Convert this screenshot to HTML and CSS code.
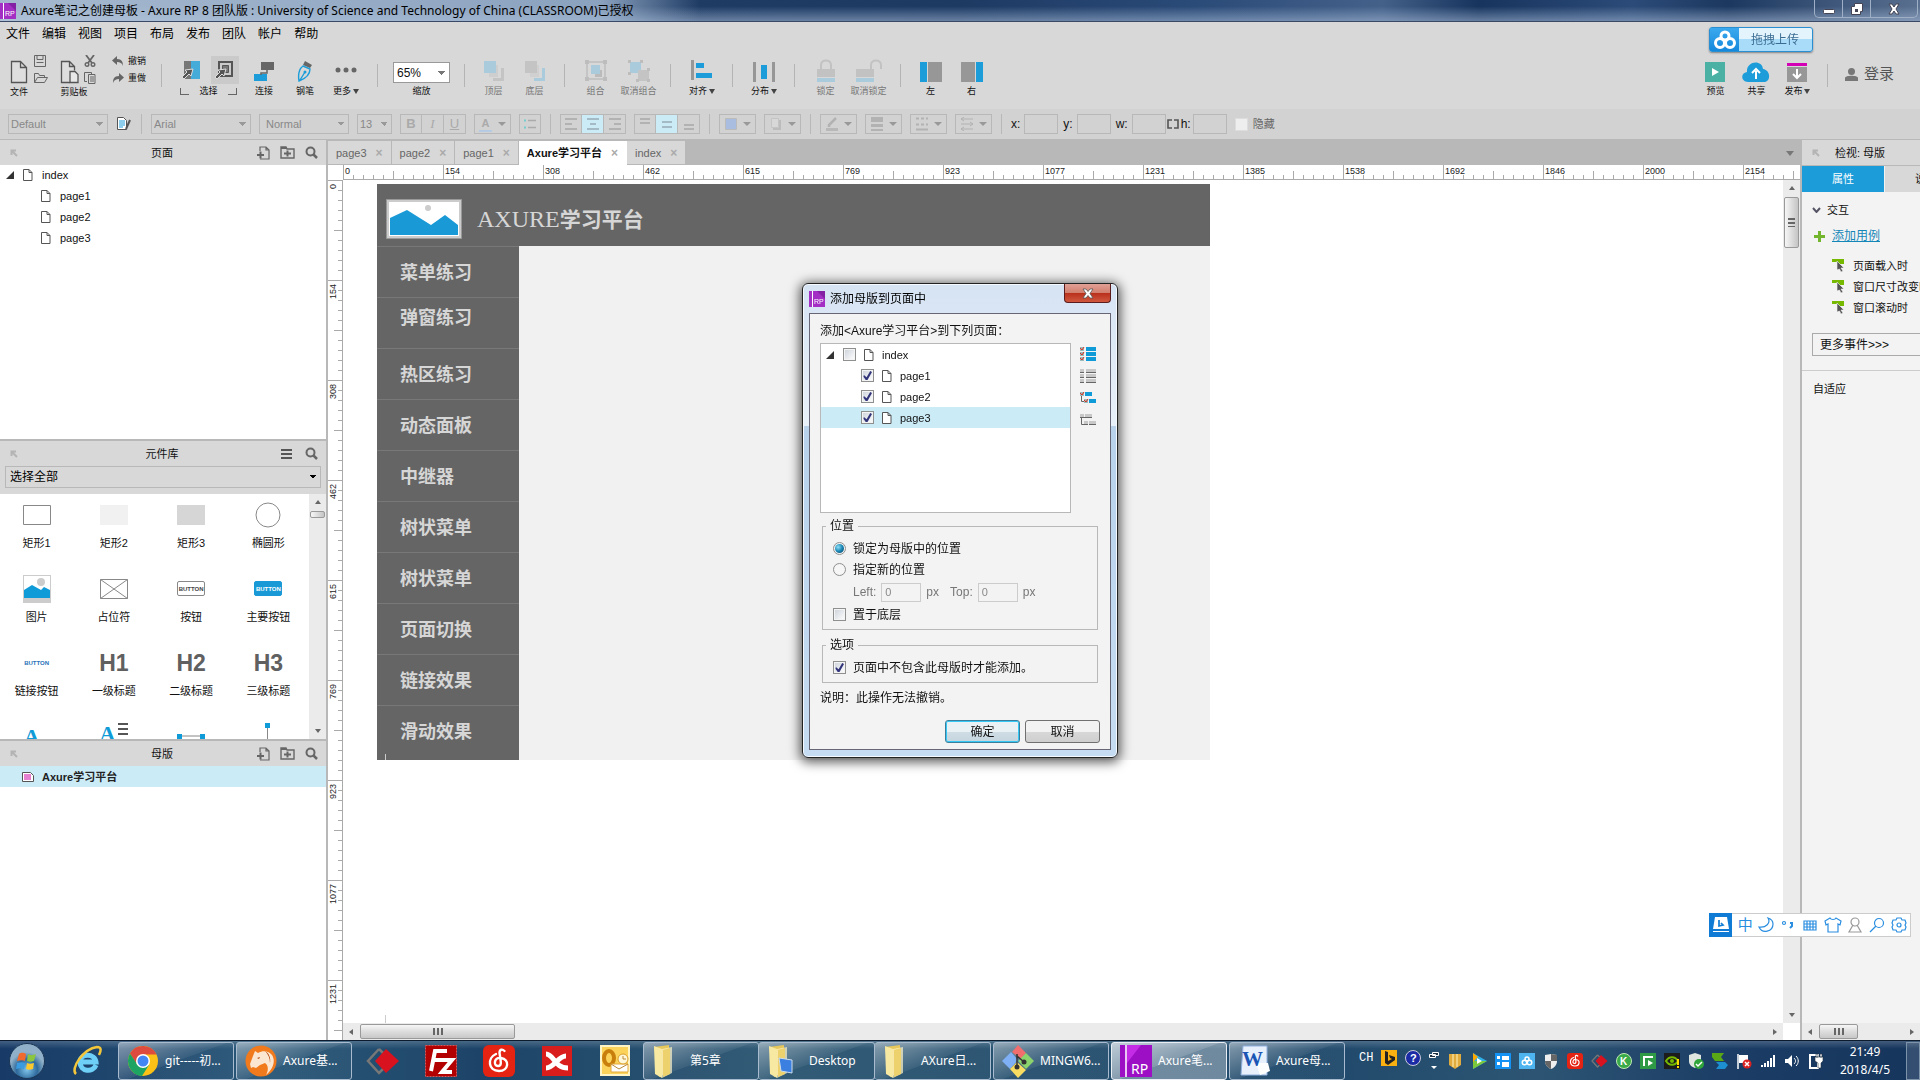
FILE: index.html
```html
<!DOCTYPE html>
<html lang="zh-CN">
<head>
<meta charset="utf-8">
<title>Axure笔记之创建母板 - Axure RP 8 团队版</title>
<link rel="stylesheet" href="styles.css">
</head>
<body>
<svg class="sprite" aria-hidden="true">
  <symbol id="rp" viewBox="0 0 16 16"><path fill="#a32fc4" d="M0 0h16v16H0z"/><path fill="#8420a4" d="M8 0h8v8z"/><path fill="#fff" d="M3 0h1v16H3z"/><text x="5" y="13" font-size="7" font-family="Liberation Sans, sans-serif" fill="#fff">RP</text></symbol>
  <symbol id="page" viewBox="0 0 10 12"><path d="M.5.5h5.500l3 3v8h-8.500zM6 .5v3h3" fill="#fff" stroke="#555"/></symbol>
  <symbol id="pin" viewBox="0 0 8 8"><path d="M1.500 6V1.500H6M2 2l5 5" fill="none" stroke="#b4b4b4" stroke-width="2"/></symbol>
  <symbol id="addpage" viewBox="0 0 13 14"><path d="M3 5V1h6l3 3v9H3M9 1v3h3" fill="none" stroke="#666" stroke-width="1.200"/><path d="M0 9h7M3.500 5.500v7" stroke="#666" stroke-width="2"/></symbol>
  <symbol id="addfolder" viewBox="0 0 15 13"><path d="M1 12V1h5l1 2h7v9z" fill="none" stroke="#666" stroke-width="1.400"/><path d="M1 1h5l1 2H1z" fill="#666"/><path d="M4 7.500h7M7.500 4.500v6" stroke="#666" stroke-width="2"/></symbol>
  <symbol id="search" viewBox="0 0 13 13"><circle cx="5.500" cy="5.500" r="4" fill="none" stroke="#666" stroke-width="2"/><path d="M8.500 8.500l3.500 3.500" stroke="#666" stroke-width="2.500"/></symbol>
  <symbol id="folder" viewBox="0 0 24 34"><path fill="#e6c75b" d="M2 3l15-2v27l-10 5z"/><path fill="#f8e9a2" d="M2 2l8 3v29l-7-4z"/><path fill="#fdf4c8" d="M10 5l10-2v26l-10 5z" opacity=".7"/><path fill="#ecd16d" d="M11 6l7-2v26l-7 3z"/></symbol>
  <symbol id="event" viewBox="0 0 14 13"><path fill="#76b900" d="M0 0h12v5H8L5 3H0z"/><path fill="#555" stroke="#f3f3f3" stroke-width=".6" d="M5 2l7 7H9l2 3-2 1-1.500-3L5 11z"/></symbol>
  <symbol id="netease" viewBox="0 0 32 32"><rect width="32" height="32" rx="6" fill="#e42313"/><path d="M13 9c-9 4-8 17 3 17 10 0 11-12 2-13-7-1-8 8-3 8 4 0 3-4 1.500-13 0-4 3-4 5-2" fill="none" stroke="#fff" stroke-width="2.400" stroke-linecap="round"/></symbol>
  <symbol id="diamond" viewBox="0 0 34 32"><path d="M13 4L2 16l11 12 6-6M13 4l5 5" fill="none" stroke="#777" stroke-width="2.500"/><path fill="#d8121f" d="M20 4l13 12-13 12L9 16z"/></symbol>
  <symbol id="cloudrings" viewBox="0 0 22 20"><g fill="none" stroke="#fff" stroke-width="3"><circle cx="11" cy="6" r="4"/><circle cx="6" cy="13" r="4.500"/><circle cx="16" cy="13" r="4.500"/></g></symbol>
  <symbol id="bing" viewBox="0 0 16 16"><path fill="#222" d="M4 1l3 1v9l4-2-2-1-1-3 6 2v3l-7 5-3-2z"/></symbol>
</svg>

<header class="titlebar">
  <svg width="16" height="18"><use href="#rp"/></svg>
  <h1>Axure笔记之创建母板 - Axure RP 8 团队版 : University of Science and Technology of China (CLASSROOM)已授权</h1>
  <div class="winbtns">
    <button aria-label="最小化"><svg width="12" height="12"><rect x=".5" y="6.500" width="11" height="4" rx="1" fill="#fff" stroke="#445"/></svg></button>
    <button aria-label="还原"><svg width="12" height="12"><path d="M3.500.5h8v8h-2v3h-9v-8h3z" fill="#fff" stroke="#445"/><path d="M4 6h3v3H4z" fill="#445"/></svg></button>
    <button class="wide" aria-label="关闭"><svg width="12" height="12"><path d="M1 1h3l2 3 2-3h3L8 6l3 5H8L6 8l-2 3H1l3-5z" fill="#fff" stroke="#445"/></svg></button>
  </div>
</header>

<nav class="menubar">
  <a href="#">文件</a><a href="#">编辑</a><a href="#">视图</a><a href="#">项目</a><a href="#">布局</a><a href="#">发布</a><a href="#">团队</a><a href="#">帐户</a><a href="#">帮助</a>
</nav>

<div class="toolbar">
  <div class="group g-file">
    <button class="tool t-doc"><svg width="18" height="24"><path d="M1.500 1.500h9l6 6v15h-15zM10.500 1.500v6h6" fill="#dedede" stroke="#555" stroke-width="1.300"/></svg><span>文件</span></button>
    <div class="stack">
      <button aria-label="保存"><svg width="12" height="12"><path d="M.5.5h11v11H.5zM3 .5v4h6v-4M2.500 7.500h7" fill="none" stroke="#666"/></svg></button>
      <button aria-label="打开"><svg width="14" height="12"><path d="M.5 10.500v-9h4l1 2h5v2M.5 10.500l3-5h10l-3 5z" fill="none" stroke="#666"/></svg></button>
    </div>
    <button class="tool t-clip"><svg width="20" height="24"><path d="M10 22.500H1.500v-21h8l5 5v4M9.500 1.500v5h5" fill="#dedede" stroke="#555" stroke-width="1.300"/><path d="M10 11.500h5l3 3v8h-8z" fill="#e8e8e8" stroke="#555" stroke-width="1.300"/></svg><span>剪贴板</span></button>
    <div class="stack cut">
      <button aria-label="剪切"><svg width="12" height="12"><path d="M2 0l6 8M10 0L4 8" stroke="#666" stroke-width="1.800"/><circle cx="3" cy="9.500" r="1.800" fill="none" stroke="#666" stroke-width="1.400"/><circle cx="9" cy="9.500" r="1.800" fill="none" stroke="#666" stroke-width="1.400"/></svg></button>
      <button aria-label="粘贴"><svg width="12" height="12"><path d="M3 9.500H.5v-9h7V2M4.500 2.500h6.500v9H4.500zM6 5h4M6 7h4M6 9h4" fill="none" stroke="#666"/></svg></button>
    </div>
    <div class="stack undo">
      <button><svg width="12" height="10"><path fill="#666" d="M5 0v3c5 0 6 3 6 7-1-3-3-4-6-4v3L0 4.500z"/></svg>撤销</button>
      <button><svg width="12" height="10"><path fill="#666" d="M7 0v3C2 3 1 6 1 10c1-3 3-4 6-4v3l5-4.500z"/></svg>重做</button>
    </div>
  </div>
  <div class="group g-select">
    <div class="modes">
      <div class="pair">
        <button aria-label="相交选择"><svg width="18" height="24"><path fill="#777" d="M1 3h7v18H1z"/><path fill="#45abd9" d="M8 3h9v18H8z"/><path fill="#555" stroke="#ddd" d="M10 11L2 12l2 2-5 5 2 2 5-5 2 2z"/></svg></button>
        <button class="on" aria-label="包含选择"><svg width="20" height="24"><path fill="none" stroke="#555" stroke-width="2" d="M4 4h13v14H4z"/><path fill="#777" stroke="#555" d="M7.500 7.500h6v7h-6z"/><path fill="#555" stroke="#ddd" d="M11 11l-8 1 2 2-5 5 2 2 5-5 2 2z"/></svg></button>
      </div>
      <span class="bracket">选择</span>
    </div>
    <button class="tool"><svg width="20" height="24"><path fill="#666" d="M7 3h13v8H7z"/><path fill="#1c9dd9" d="M0 15h13v7H0z"/><path d="M13 11v3H7v2" fill="none" stroke="#666" stroke-width="1.500"/></svg><span>连接</span></button>
    <button class="tool"><svg width="16" height="24"><path fill="#666" d="M8 2l7 4-2 3-7-3z"/><path d="M6 7l7 3c0 5-3 9-11 12-1-6 0-12 4-15zM3 21l5-8" fill="none" stroke="#1c9dd9" stroke-width="1.400"/><circle cx="8" cy="13" r="1.500" fill="#1c9dd9"/></svg><span>钢笔</span></button>
    <button class="tool"><svg width="22" height="24"><g fill="#666"><circle cx="3" cy="11" r="2.500"/><circle cx="11" cy="11" r="2.500"/><circle cx="19" cy="11" r="2.500"/></g></svg><span>更多<i class="caret"></i></span></button>
  </div>
  <div class="group g-zoom">
    <label class="zoom"><select><option>65%</option></select><span>缩放</span></label>
  </div>
  <div class="group g-order off">
    <button class="tool"><svg width="20" height="24"><path fill="#c4c4c4" d="M9 9h11v13H9v-3h8V9z"/><path fill="#cecece" d="M5 6h9v12H5z"/><path fill="#a9cbdb" d="M0 2h12v12H0z"/></svg><span>顶层</span></button>
    <button class="tool"><svg width="20" height="24"><path fill="#a9cbdb" d="M9 9h11v13H9v-3h8V9z"/><path fill="#d0d0d0" d="M5 6h9v12H5z"/><path fill="#c4c4c4" d="M0 2h12v12H0z"/></svg><span>底层</span></button>
  </div>
  <div class="group g-pair off">
    <button class="tool w"><svg width="24" height="24"><path fill="none" stroke="#bdbdbd" stroke-width="1.500" d="M3 3h18v17H3z"/><path fill="#bdbdbd" d="M1 1h4v4H1zM19 1h4v4h-4zM1 18h4v4H1zM19 18h4v4h-4z"/><path fill="#bbb" d="M11 11h7v7h-7z"/><path fill="#a9cbdb" d="M7 6h9v9H7z"/></svg><span>组合</span></button>
    <button class="tool w"><svg width="24" height="24"><path fill="#a9cbdb" d="M3 3h11v11H3z"/><path fill="#c4c4c4" d="M11 11h11v11H11z"/><path fill="#bdbdbd" d="M1 1h3v3H1zM13 1h3v3h-3zM1 13h3v3H1zM9 20h3v3H9zM20 9h3v3h-3zM20 20h3v3h-3z"/></svg><span>取消组合</span></button>
  </div>
  <div class="group g-one">
    <button class="tool"><svg width="22" height="24"><path fill="#979797" d="M0 1h3v20H0z"/><path fill="#1c9dd9" d="M5 4h8v5H5zM5 14h16v5H5z"/></svg><span>对齐<i class="caret"></i></span></button>
  </div>
  <div class="group g-one">
    <button class="tool"><svg width="22" height="24"><path fill="#979797" d="M0 3h3v20H0zM19 3h3v20h-3z"/><path fill="#1c9dd9" d="M8 6h6v14H8z"/></svg><span>分布<i class="caret"></i></span></button>
  </div>
  <div class="group g-pair off">
    <button class="tool w"><svg width="20" height="24"><path fill="#c2c2c2" d="M1 10h18v8H1z"/><path fill="#a9cbdb" d="M1 19h18v4H1z"/><path d="M5 10V6c0-6 10-6 10 0v4" fill="none" stroke="#c2c2c2" stroke-width="2"/></svg><span>锁定</span></button>
    <button class="tool w"><svg width="26" height="24"><path fill="#c2c2c2" d="M0 10h18v8H0z"/><path fill="#a9cbdb" d="M0 19h18v4H0z"/><path d="M15 10V6c0-6 10-6 10 0v4" fill="none" stroke="#c2c2c2" stroke-width="2"/></svg><span>取消锁定</span></button>
  </div>
  <div class="group g-sides">
    <button class="tool"><svg width="22" height="24"><path fill="#1c9dd9" d="M0 3h7v20H0z"/><path fill="#979797" d="M8 3h14v20H8z"/></svg><span>左</span></button>
    <button class="tool"><svg width="22" height="24"><path fill="#1c9dd9" d="M15 3h7v20h-7z"/><path fill="#979797" d="M0 3h14v20H0z"/></svg><span>右</span></button>
  </div>
  <div class="group g-share">
    <button class="tool"><svg width="20" height="24"><path fill="#4bb1a5" d="M0 3h20v20H0z"/><path fill="#fff" d="M7 9l7 4-7 4z"/></svg><span>预览</span></button>
    <button class="tool"><svg width="28" height="24"><path fill="#1c9dd9" d="M6 23c-7 0-8-9-1-10C4 2 20 0 21 10c8 1 8 13 1 13z"/><path d="M14 20v-8M10 14l4-4 4 4" fill="none" stroke="#fff" stroke-width="2"/></svg><span>共享</span></button>
    <button class="tool"><svg width="20" height="24"><path fill="#d400b5" d="M0 4h20v3H0z"/><path fill="#979797" d="M0 8h20v15H0z"/><path d="M10 10v9M6 15l4 4 4-4" fill="none" stroke="#fff" stroke-width="2"/></svg><span>发布<i class="caret"></i></span></button>
  </div>
  <button class="login"><svg width="13" height="13"><circle cx="6.500" cy="3.500" r="3.500" fill="#777"/><path fill="#777" d="M0 13V10c0-3 13-3 13 0v3z"/></svg>登录</button>
</div>

<div class="formatbar">
  <select class="w100" aria-label="样式"><option>Default</option></select>
  <button class="plain" aria-label="编辑样式"><svg width="14" height="14"><path d="M.5.5h6l3 3v9h-9z" fill="#fff" stroke="#555"/><path d="M2 4h6M2 6h6M2 8h6M2 10h4" stroke="#1c9dd9"/><path d="M13 3L9 12" stroke="#555" stroke-width="2"/></svg></button>
  <i class="sep"></i>
  <select class="w100" aria-label="字体"><option>Arial</option></select>
  <select class="w90 in" aria-label="字形"><option>Normal</option></select>
  <select class="w35" aria-label="字号"><option>13</option></select>
  <div class="seg"><button><b>B</b></button><button><em>I</em></button><button><u>U</u></button></div>
  <button class="drop"><b class="ink">A</b></button>
  <div class="seg"><button aria-label="项目符号"><svg width="14" height="14"><path d="M5 3.500h8M5 10.500h8" stroke="#aaa" stroke-width="1.500"/><path d="M1 3.500h2M1 10.500h2" stroke="#7cc" stroke-width="2"/></svg></button></div>
  <i class="sep"></i>
  <div class="seg">
    <button aria-label="左对齐"><svg width="14" height="14"><path d="M1 2h12M1 7h7M1 12h12" stroke="#b2b2b2" stroke-width="2"/></svg></button>
    <button class="on" aria-label="居中"><svg width="14" height="14"><path d="M1 2h12M4 7h6M1 12h12" stroke="#a9bcc4" stroke-width="2"/></svg></button>
    <button aria-label="右对齐"><svg width="14" height="14"><path d="M1 2h12M6 7h7M1 12h12" stroke="#b2b2b2" stroke-width="2"/></svg></button>
  </div>
  <div class="seg">
    <button aria-label="顶部"><svg width="14" height="14"><path d="M2 2h10M2 6h10" stroke="#b2b2b2" stroke-width="2"/></svg></button>
    <button class="on" aria-label="中部"><svg width="14" height="14"><path d="M2 5h10M2 10h10" stroke="#a9bcc4" stroke-width="2"/></svg></button>
    <button aria-label="底部"><svg width="14" height="14"><path d="M2 8h10M2 12h10" stroke="#b2b2b2" stroke-width="2"/></svg></button>
  </div>
  <i class="sep"></i>
  <button class="drop" aria-label="填充"><svg width="14" height="14"><path fill="#a9bde0" stroke="#bbb" d="M1.500 1.500h11v11h-11z"/></svg></button>
  <button class="drop" aria-label="阴影"><svg width="14" height="14"><path fill="#bcbcbc" d="M5 3h7v10H4v-2h6z"/><path fill="#d8d8d8" stroke="#c4c4c4" d="M2.500 1.500h7v9h-7z"/></svg></button>
  <i class="sep"></i>
  <button class="drop" aria-label="线条颜色"><svg width="14" height="14"><path d="M11 1L4 8v2" stroke="#b2b2b2" stroke-width="2.500" fill="none"/><path fill="#b8b8b8" d="M1 11h12v3H1z"/></svg></button>
  <button class="drop" aria-label="线宽"><svg width="14" height="14"><path fill="#b2b2b2" d="M1 0h12v5H1zM1 7h12v3H1zM1 12h12v2H1z"/></svg></button>
  <button class="drop" aria-label="线型"><svg width="14" height="14"><path d="M1 1.500h12M1 7.500h12" stroke="#b2b2b2" stroke-width="2" stroke-dasharray="3 2"/><path d="M1 12.500h12" stroke="#b2b2b2" stroke-width="2"/></svg></button>
  <button class="drop" aria-label="箭头"><svg width="14" height="14"><path d="M1 2h12M1 7h12M1 12h12M4 0L1 2l3 2M10 5l3 2-3 2M4 10l-3 2 3 2" stroke="#b2b2b2" fill="none"/></svg></button>
  <i class="sep"></i>
  <label>x:<input></label>
  <label>y:<input></label>
  <label>w:<input></label>
  <label class="tight"><svg width="12" height="10"><path d="M5 1H1v8h4M7 1h4v8H7" fill="none" stroke="#555" stroke-width="1.600"/></svg>h:<input></label>
  <label class="hide"><input type="checkbox">隐藏</label>
</div>

<main>
  <aside class="left">
    <section class="pages">
      <header class="phead"><svg width="8" height="8"><use href="#pin"/></svg><h2>页面</h2>
        <div class="acts"><svg width="13" height="14"><use href="#addpage"/></svg><svg width="15" height="13"><use href="#addfolder"/></svg><svg width="13" height="13"><use href="#search"/></svg></div></header>
      <ul class="tree">
        <li><i class="open"></i><svg width="10" height="12"><use href="#page"/></svg>index</li>
        <li class="sub"><svg width="10" height="12"><use href="#page"/></svg>page1</li>
        <li class="sub"><svg width="10" height="12"><use href="#page"/></svg>page2</li>
        <li class="sub"><svg width="10" height="12"><use href="#page"/></svg>page3</li>
      </ul>
    </section>
    <section class="library">
      <header class="phead"><svg width="8" height="8"><use href="#pin"/></svg><h2>元件库</h2>
        <div class="acts wide"><svg width="11" height="12"><path d="M0 2h11M0 6h11M0 10h11" stroke="#555" stroke-width="2"/></svg><svg width="13" height="13"><use href="#search"/></svg></div></header>
      <div class="pick"><select aria-label="元件库"><option>选择全部</option></select></div>
      <div class="libbody">
        <div class="widgets">
          <figure><svg width="30" height="30"><path d="M1.500 5.500h27v19h-27z" fill="#fff" stroke="#888"/></svg><figcaption>矩形1</figcaption></figure>
          <figure><svg width="30" height="30"><path d="M1 5h28v20H1z" fill="#f1f1f1"/></svg><figcaption>矩形2</figcaption></figure>
          <figure><svg width="30" height="30"><path d="M1 5h28v20H1z" fill="#d6d6d6"/></svg><figcaption>矩形3</figcaption></figure>
          <figure><svg width="30" height="30"><circle cx="15" cy="15" r="12" fill="#fff" stroke="#888"/></svg><figcaption>椭圆形</figcaption></figure>
          <figure><svg width="30" height="30"><path fill="#ccc" d="M1 1h28v28H1z"/><path fill="#fff" d="M2 2h26v22H2z"/><circle cx="19" cy="8" r="4" fill="#ccc"/><path fill="#0f9bd8" d="M2 16l8-5 9 5 3-3 6 3v8H2z"/></svg><figcaption>图片</figcaption></figure>
          <figure><svg width="30" height="30"><path d="M1.500 5.500h27v19h-27zl27 19M28.500 5.500l-27 19" fill="#fff" stroke="#888"/></svg><figcaption>占位符</figcaption></figure>
          <figure><span class="mini">BUTTON</span><figcaption>按钮</figcaption></figure>
          <figure><span class="mini primary">BUTTON</span><figcaption>主要按钮</figcaption></figure>
          <figure><span class="mini link">BUTTON</span><figcaption>链接按钮</figcaption></figure>
          <figure><span class="hx">H1</span><figcaption>一级标题</figcaption></figure>
          <figure><span class="hx">H2</span><figcaption>二级标题</figcaption></figure>
          <figure><span class="hx">H3</span><figcaption>三级标题</figcaption></figure>
          <figure><span class="ax low">A</span></figure>
          <figure><span class="ax">A<svg width="10" height="14"><path d="M0 2h10M0 7h10M0 12h10" stroke="#555" stroke-width="2"/></svg></span></figure>
          <figure><svg width="30" height="30"><path d="M3 14h24" stroke="#888"/><path fill="#0f9bd8" d="M1 12h5v5H1zM24 12h5v5h-5z"/></svg></figure>
          <figure><svg width="30" height="30"><path d="M14.500 3v27" stroke="#888"/><path fill="#0f9bd8" d="M12 1h5v5h-5z"/></svg></figure>
        </div>
        <div class="vbar lib"><i class="up"></i><i class="thumb"></i><i class="down"></i></div>
      </div>
    </section>
    <section class="masters">
      <header class="phead"><svg width="8" height="8"><use href="#pin"/></svg><h2>母版</h2>
        <div class="acts"><svg width="13" height="14"><use href="#addpage"/></svg><svg width="15" height="13"><use href="#addfolder"/></svg><svg width="13" height="13"><use href="#search"/></svg></div></header>
      <p class="master"><svg width="12" height="10"><path d="M.5.5h8l3 3v6H.5z" fill="#fff" stroke="#555"/><path fill="#e67fd0" d="M2 2h7v6H2z"/></svg>Axure学习平台</p>
    </section>
  </aside>

  <section class="work">
    <nav class="tabs">
      <a href="#">page3<i>×</i></a><a href="#">page2<i>×</i></a><a href="#">page1<i>×</i></a><a href="#" class="cur">Axure学习平台<i>×</i></a><a href="#">index<i>×</i></a>
      <b class="more"></b>
    </nav>
    <div class="stage">
      <div class="rtop"><span>0</span><span>154</span><span>308</span><span>462</span><span>615</span><span>769</span><span>923</span><span>1077</span><span>1231</span><span>1385</span><span>1538</span><span>1692</span><span>1846</span><span>2000</span><span>2154</span></div>
      <div class="rleft"><span>0</span><span>154</span><span>308</span><span>462</span><span>615</span><span>769</span><span>923</span><span>1077</span><span>1231</span></div>
      <div class="canvas">
        <article class="board">
          <header>
            <svg width="76" height="40"><path fill="#ccc" stroke="#999" d="M.5.500h75v39H.5z"/><path fill="#fff" d="M3 3h70v34H3z"/><circle cx="42" cy="9" r="3" fill="#ccc"/><path fill="#199ad6" d="M4 19l17-8 24 15 14-10 13 10v10H4z"/></svg>
            <h2>AXURE<b>学习平台</b></h2>
          </header>
          <ul>
            <li>菜单练习</li><li class="raised">弹窗练习</li><li>热区练习</li><li>动态面板</li><li>中继器</li><li>树状菜单</li><li>树状菜单</li><li>页面切换</li><li>链接效果</li><li>滑动效果</li>
          </ul>
        </article>
      </div>
      <div class="vbar main"><i class="up"></i><i class="thumb"></i><i class="down"></i></div>
      <div class="hbar main"><i class="lt"></i><i class="thumb"></i><i class="rt"></i></div>
    </div>
  </section>

  <aside class="right">
    <header class="phead insp"><svg width="8" height="8"><use href="#pin"/></svg><h2>检视: 母版</h2></header>
    <nav class="ptabs"><a href="#" class="cur">属性</a><a href="#">说明</a></nav>
    <section class="events">
      <h3><svg width="9" height="6"><path d="M1 1l3.500 4L8 1" fill="none" stroke="#556" stroke-width="2"/></svg>交互</h3>
      <p class="add"><svg width="11" height="11"><path d="M5.500 0v11M0 5.500h11" stroke="#74b52e" stroke-width="3"/></svg><a href="#">添加用例</a></p>
      <ul>
        <li><svg width="14" height="13"><use href="#event"/></svg>页面载入时</li>
        <li><svg width="14" height="13"><use href="#event"/></svg>窗口尺寸改变时</li>
        <li><svg width="14" height="13"><use href="#event"/></svg>窗口滚动时</li>
      </ul>
      <button>更多事件&gt;&gt;&gt;</button>
    </section>
    <section class="adapt">自适应</section>
    <div class="hbar side"><i class="lt"></i><i class="thumb"></i><i class="rt"></i></div>
  </aside>
</main>

<button class="upload"><span><svg width="22" height="20"><use href="#cloudrings"/></svg></span>拖拽上传</button>

<div class="ime">
  <span class="badge"><svg width="16" height="16"><path fill="#fff" d="M2 0h12l2 12H0zM0 14h16v1H0z"/><path d="M6 3v6l4-1-2-2" fill="none" stroke="#0f7bd4" stroke-width="1.700"/></svg></span>
  <span>中</span>
  <svg width="16" height="16"><path d="M10 1c3 5-2 10-9 9 3 7 14 5 14-3 0-3-2-5-5-6z"/></svg>
  <svg width="16" height="16"><circle cx="4" cy="6" r="1.500"/><path d="M10 6h2v3l-2 2" stroke-width="2"/></svg>
  <svg width="16" height="16"><path d="M2 4h12v9H2zM2 7h12M2 10h12M5 4v9M8 4v9M11 4v9"/></svg>
  <svg width="18" height="16"><path d="M6 1L1 4l1 4 2-1v8h10V7l2 1 1-4-5-3c-1 2-5 2-6 0z"/></svg>
  <svg width="16" height="16" class="gray"><circle cx="8" cy="5" r="4"/><path d="M6 8l-4 7h12l-4-7"/></svg>
  <svg width="16" height="16"><circle cx="10" cy="6" r="4.500"/><path d="M7 9l-6 6"/></svg>
  <svg width="16" height="16"><circle cx="8" cy="8" r="2"/><path d="M6 1h4l1 2 3 0 1 3-1 2 1 2-1 3-3 0-1 2H6l-1-2-3 0-1-3 1-2-1-2 1-3 3 0z"/></svg>
</div>

<form class="dialog" role="dialog" aria-labelledby="dlg-title" onsubmit="return false">
  <header><svg width="16" height="16"><use href="#rp"/></svg><h2 id="dlg-title">添加母版到页面中</h2>
    <button type="button" class="x" aria-label="关闭"><svg width="12" height="11"><path d="M1 1h3l2 2.500L8 1h3L8 5.500l3 4.500H8L6 7.500 4 10H1l3-4.500z" fill="#fff" stroke="#555" stroke-width=".8"/></svg></button></header>
  <div class="dbody">
    <p>添加&lt;Axure学习平台&gt;到下列页面：</p>
    <div class="picker">
      <ul class="list">
        <li><i class="open"></i><label><input type="checkbox"><svg width="10" height="12"><use href="#page"/></svg>index</label></li>
        <li class="sub"><label><input type="checkbox" checked><svg width="10" height="12"><use href="#page"/></svg>page1</label></li>
        <li class="sub"><label><input type="checkbox" checked><svg width="10" height="12"><use href="#page"/></svg>page2</label></li>
        <li class="sub sel"><label><input type="checkbox" checked><svg width="10" height="12"><use href="#page"/></svg>page3</label></li>
      </ul>
      <div class="side-acts">
        <button type="button" aria-label="全选"><svg width="16" height="14"><path fill="#0f9bd8" d="M6 0h10v4H6zM6 5h10v4H6zM6 10h10v4H6z"/><path fill="#9bb" d="M0 0h4v4H0zM0 5h4v4H0zM0 10h4v4H0z"/><path d="M0 1l2 2 2-3M0 6l2 2 2-3M0 11l2 2 2-3" stroke="#e03020" fill="none"/></svg></button>
        <button type="button" aria-label="全不选"><svg width="16" height="14"><path fill="#c8c8c8" d="M0 0h4v3H0zM6 0h10v3H6zM0 5h4v3H0zM6 5h10v3H6zM0 10h4v3H0zM6 10h10v3H6z"/><path d="M0 3.500h4M6 3.500h10M0 8.500h4M6 8.500h10M0 13.500h4M6 13.500h10" stroke="#666"/></svg></button>
        <button type="button" aria-label="选择子页"><svg width="16" height="14"><path fill="#0f9bd8" d="M5 1h7v4H5zM9 8h7v4H9z"/><path d="M1.500 5v5.500H4" stroke="#666" fill="none"/><path fill="#9bb" d="M0 1h4v4H0zM4 8h4v4H4z"/><path d="M0 2l2 2 2-3M4 9l2 2 2-3" stroke="#e03020" fill="none"/></svg></button>
        <button type="button" aria-label="取消子页"><svg width="16" height="14"><path fill="#c8c8c8" d="M0 1h4v3H0zM5 1h7v3H5zM4 8h4v3H4zM9 8h7v3H9z"/><path d="M0 4.500h12M1.500 5v6.500H8M9 11.500h7" stroke="#666" fill="none"/></svg></button>
      </div>
    </div>
    <fieldset class="place"><legend>位置</legend>
      <label><input type="radio" name="pos" checked>锁定为母版中的位置</label>
      <label><input type="radio" name="pos">指定新的位置</label>
      <div class="coords"><label for="cl">Left:</label><input id="cl" value="0" disabled><span>px</span><label for="ct" class="top">Top:</label><input id="ct" value="0" disabled><span>px</span></div>
      <label><input type="checkbox">置于底层</label>
    </fieldset>
    <fieldset class="opts"><legend>选项</legend>
      <label><input type="checkbox" checked>页面中不包含此母版时才能添加。</label>
    </fieldset>
    <p>说明：此操作无法撤销。</p>
    <div class="btns"><button class="ok">确定</button><button type="button">取消</button></div>
  </div>
</form>

<footer class="taskbar">
  <button class="orb" aria-label="开始"><svg width="38" height="38"><defs><radialGradient id="o" cy=".75"><stop stop-color="#7fc4ec"/><stop offset=".6" stop-color="#2e6a9c"/><stop offset="1" stop-color="#8fb0c8"/></radialGradient></defs><circle cx="19" cy="19" r="17.500" fill="url(#o)" stroke="#1b3554"/><path fill="#ef6a2c" d="M11 12c3-2 5-1 7 0l-1 7c-2-1-5-1-8 0z"/><path fill="#8cc63e" d="M20 12c3 2 5 1 8 0l-2 7c-3 1-5 1-7 0z"/><path fill="#3b9be0" d="M9 21c3-1 5-1 8 0l-1 6c-2-1-5-1-8 0z"/><path fill="#fbc92d" d="M19 21c2 1 4 1 7 0l-1 6c-3 1-5 1-7 0z"/></svg></button>
  <button class="icon" aria-label="Internet Explorer"><svg width="32" height="32"><path d="M25 20c-3 8-16 7-16-3 0-9 15-9 16 0H10" fill="none" stroke="#6fd0f7" stroke-width="5"/><path d="M5 29C-1 24 12 4 26 2c5 0 4 4 2 8" fill="none" stroke="#f4c63a" stroke-width="2.500"/></svg></button>
  <button class="app gap"><svg width="32" height="32"><circle cx="16" cy="16" r="15" fill="#fbc116"/><path fill="#dd4b3e" d="M3 8.500A15 15 0 0 1 29.500 9.500H16L9 18z"/><path fill="#1da462" d="M3 8.500A15 15 0 0 0 15 31l7-11-12-1z"/><circle cx="16" cy="16" r="7" fill="#fff"/><circle cx="16" cy="16" r="5.500" fill="#4286f5"/></svg>git-----初...</button>
  <button class="app"><svg width="32" height="32"><circle cx="16" cy="16" r="15.500" fill="#f07a1c"/><path fill="#fbe6d2" d="M5 19l3-8 2-5 3 2c5-3 11-2 14 2 4 6 1 14-6 20 3-6 2-10-1-12l-5 2-4 3-3-1-2 1z"/><path fill="#b54a10" d="M12 13l3-1-1 2zM20 6c4 2 6 7 5 12 0-5-2-9-5-12z"/></svg>Axure基...</button>
  <button class="icon" aria-label="工具"><svg width="34" height="32"><use href="#diamond"/></svg></button>
  <button class="icon" aria-label="FileZilla"><svg width="32" height="32"><path fill="#b30000" stroke="#d55" stroke-dasharray="2 1" d="M.5.5h31v31H.5z"/><path d="M6 26L10 6h12M8 15h10M17 15h10l-10 12h10" fill="none" stroke="#fff" stroke-width="4"/></svg></button>
  <button class="icon" aria-label="网易云音乐"><svg width="32" height="32"><use href="#netease"/></svg></button>
  <button class="icon" aria-label="XMind"><svg width="30" height="30"><path fill="#d91c1c" d="M0 0h30v30H0z"/><path d="M4 8c8 0 8 14 22 14M4 22c8 0 12-12 20-12" fill="none" stroke="#fff" stroke-width="5"/></svg></button>
  <button class="icon last" aria-label="Outlook"><svg width="32" height="32"><path fill="#fbd35b" stroke="#fff4c5" stroke-width="2" d="M2 1h28v29H2z"/><ellipse cx="10" cy="13" rx="5" ry="7" fill="none" stroke="#c97f0c" stroke-width="4"/><path fill="#fff" stroke="#e3a93a" d="M12 19h17v8H12z"/><circle cx="24" cy="14" r="5" fill="#fff7da" stroke="#d9a02a"/><path d="M24 11v3h3M12 19l8 5 9-5" fill="none" stroke="#b98a3a"/></svg></button>
  <div class="stacked">
    <button class="app"><svg width="24" height="34"><use href="#folder"/></svg>第5章</button>
    <button class="app"><svg width="28" height="34"><use href="#folder" width="24" height="34"/><path fill="#3b7fe0" stroke="#cde" d="M12 14l13 2v13l-11-2z"/></svg>Desktop</button>
    <button class="app"><svg width="24" height="34"><use href="#folder"/></svg>AXure日...</button>
  </div>
  <button class="app"><svg width="32" height="34"><path fill="#f26e6e" d="M16 1l8 8-5 6-9-7z"/><path fill="#7fb0f5" d="M0 17l9-9 7 8-8 9z"/><path fill="#8bd36c" d="M24 9l8 8-8 8-8-8z"/><path fill="#f8dc62" d="M8 25l7-7 9 8-8 8z"/><path d="M15 10v14M15 12l7 6" stroke="#333" stroke-width="1.500"/><circle cx="15" cy="23" r="2.500" fill="#333"/><circle cx="22" cy="18" r="2.500" fill="#333"/></svg>MINGW6...</button>
  <button class="app active"><svg width="32" height="32"><path fill="#9c0fc4" d="M0 0h32v32H0z"/><path fill="#c32be6" d="M7 0h14L7 18z"/><path fill="#ebc7f5" d="M5 0h2v32H5z"/><text x="11" y="29" font-size="14" font-family="Noto Sans, sans-serif" fill="#fff">RP</text></svg>Axure笔...</button>
  <button class="app"><svg width="32" height="32"><path fill="#e8f0fb" stroke="#8fb0df" d="M5 1h24v29H3z"/><path fill="#fff" d="M18 18h12l2 8-10 4z"/><text x="4" y="21" font-size="21" font-weight="bold" font-family="Liberation Serif, serif" fill="#1c56b5">W</text></svg>Axure母...</button>
  <div class="tray">
    <span class="lang">CH</span>
    <svg width="16" height="16" class="hi"><path fill="#f9b112" d="M0 0h16v16H0z"/><use href="#bing"/></svg>
    <svg width="16" height="16" class="hi"><circle cx="8" cy="8" r="7.500" fill="#1b2ba6" stroke="#ccd"/><text x="5" y="12" font-size="11" font-weight="bold" font-family="Liberation Sans, sans-serif" fill="#fff">?</text></svg>
    <svg width="10" height="18" class="mini-win"><path d="M3.500.5h6v3h-6zM.5 2.500h6v3h-6z" fill="#234" stroke="#fff"/><path fill="#fff" d="M2 14h6l-3 3z"/></svg>
    <svg width="16" height="16"><path fill="#e0ab3c" d="M2 1h12v11l-6 4-6-4z"/><path d="M6 1v13M10 1v13" stroke="#fff3c0"/></svg>
    <svg width="16" height="16"><path fill="#2fb1e8" d="M2 0l14 8-14 8z"/><path fill="#7bc83c" d="M2 8h14L2 16z"/><path fill="#fa0" d="M2 0l5 4-5 5z"/><path fill="#fff" d="M6 5l5 3-5 3z"/></svg>
    <svg width="16" height="16"><path fill="#1593f5" d="M0 0h16v16H0z"/><path fill="#fff" d="M2 3h3v3H2zM7 3h7v4H7zM2 9h3v3H2zM7 9h7v5H7z"/></svg>
    <svg width="16" height="16"><path fill="#4db4f0" d="M0 0h16v16H0z"/><use href="#cloudrings" x="2" y="3" width="12" height="10"/></svg>
    <svg width="16" height="16"><path fill="#eee" d="M2 2l6-1 6 1v6c0 4-3 7-6 8-3-1-6-4-6-8z"/><path fill="#666" d="M8 1l6 1v6H8zM2 8h6v8c-3-1-6-4-6-8z"/></svg>
    <svg width="16" height="16"><use href="#netease"/></svg>
    <svg width="17" height="16"><use href="#diamond"/></svg>
    <svg width="16" height="16"><circle cx="8" cy="8" r="7.500" fill="#3aa948" stroke="#bfe8b5"/><text x="4" y="12" font-size="10" font-weight="bold" font-family="Liberation Sans, sans-serif" fill="#fff">K</text></svg>
    <svg width="16" height="16"><path fill="#2f9a45" d="M0 0h16v16H0z"/><path d="M4 13V4h9" fill="none" stroke="#fff" stroke-width="2"/><path fill="#fff" d="M8 7l5 3-5 3z"/></svg>
    <svg width="16" height="16"><path fill="#1c1c1c" d="M0 0h16v16H0z"/><path d="M2 8c3-5 9-5 12 0-3 5-9 5-12 0z" fill="none" stroke="#76b900" stroke-width="2"/><circle cx="8" cy="8" r="2" fill="#76b900"/><path fill="#fd0" d="M13 6h2v6h-2zM13 13h2v2h-2z"/></svg>
    <svg width="16" height="16"><path fill="#dfe6df" d="M1 2l6-2 6 2v6c0 4-3 6-6 7-3-1-6-3-6-7z"/><circle cx="11" cy="11" r="5" fill="#2fa43a"/><path d="M8 11l2 2 4-4" fill="none" stroke="#fff" stroke-width="1.500"/></svg>
    <svg width="16" height="16"><path fill="#5aa816" d="M0 0h12l-3 4 3 4H3L0 4z"/><path fill="#1d8fd0" d="M4 9h9l3 3-3 4H4l3-4z"/></svg>
    <svg width="16" height="16"><path d="M2 1v15" stroke="#fff" stroke-width="1.500"/><path fill="#fff" d="M3 2h9v8H3z"/><circle cx="11" cy="11" r="4.500" fill="#d22" /><path d="M9 9l4 4M13 9l-4 4" stroke="#fff" stroke-width="1.500"/></svg>
    <svg width="16" height="16"><path fill="#fff" d="M1 12h2v2H1zM4 10h2v4H4zM7 8h2v6H7zM10 5h2v9h-2zM13 2h2v12h-2z"/></svg>
    <svg width="16" height="16"><path fill="#fff" d="M1 6h3l4-4v12l-4-4H1z"/><path d="M10 5c2 2 2 4 0 6M12 3c3 3 3 7 0 10" fill="none" stroke="#fff"/></svg>
    <svg width="16" height="16"><path d="M2 2h8v13H2z" fill="none" stroke="#fff" stroke-width="2"/><path fill="#fff" stroke="#234" stroke-width=".6" d="M7 4h8v4l-2 2v5h-3v-5L7 8zM8 1h2v3H8zM12 1h2v3h-2z"/></svg>
  </div>
  <time>21:49<br>2018/4/5</time>
  <button class="desk" aria-label="显示桌面"></button>
</footer>
</body>
</html>
```
FILE: styles.css
```css
* { box-sizing: border-box; margin: 0; padding: 0; }
:root { --line: #b8b8b8; --panel: #d8d8d8; --blue: #1c9dd9; --sel: #cbebf7; --han: "Noto Sans CJK SC"; }
html, body { height: 100%; }
body {
  display: flex; flex-direction: column; overflow: hidden;
  font: 11px/14px "Liberation Sans", var(--han), sans-serif; color: #111; background: var(--panel);
}
button, select, input { font: inherit; color: inherit; background: none; border: 0; border-radius: 0; }
ul { list-style: none; }
a { color: inherit; text-decoration: none; }
h1, h2, h3 { font-size: inherit; font-weight: normal; }
svg { display: block; flex: none; }
.sprite { position: absolute; width: 0; height: 0; }

/* window frame */
.titlebar {
  display: flex; align-items: center; gap: 5px; height: 22px; flex: none; overflow: hidden;
  border-bottom: 1px solid #3a4a66;
  background:
    linear-gradient(90deg, #b9cbdfdd 0, #a6bcd6cc 600px, #7d95b500 700px),
    linear-gradient(#0000 30%, #a9bdd888),
    linear-gradient(90deg, #233f68 0, #1d3a63 50%, #2a4a77 62%, #44618a 72%, #17345e 77%, #2c4b78 85%, #1c3860 90%, #5a7090 100%);
}
.titlebar h1 { flex: 1; font: 12px/20px "Noto Sans", var(--han), sans-serif; color: #000; white-space: nowrap; }
.winbtns { display: flex; align-self: flex-start; margin-right: 2px; height: 18px; border: 1px solid #9fb0c6; border-top: 0; border-radius: 0 0 5px 5px; }
.winbtns button { width: 28px; display: grid; place-items: center; border-right: 1px solid #9fb0c6; }
.winbtns .wide { width: 46px; border: 0; }
.menubar { display: flex; gap: 12px; height: 24px; flex: none; padding-left: 6px; font-size: 12px; line-height: 24px; color: #000; }

/* main toolbar */
.toolbar { display: flex; height: 63px; flex: none; font-size: 9px; line-height: 12px; }
.group { display: flex; justify-content: center; flex: none; position: relative; }
.group:not(.g-sides)::after { content: ""; position: absolute; right: 0; top: 18px; height: 23px; width: 1px; background: #b4b4b4; }
.g-file { width: 162px; justify-content: flex-start; padding-left: 8px; }
.g-select { width: 216px; padding-left: 6px; }
.g-zoom { width: 87px; }
.g-order { width: 100px; padding-right: 2px; }
.g-pair { width: 106px; padding-right: 2px; }
.g-one { width: 62px; }
.g-sides { padding-left: 9px; }
.g-share { margin-left: auto; padding-right: 10px; }
.tool { width: 41px; padding-top: 13px; display: flex; flex-direction: column; align-items: center; gap: 2px; white-space: nowrap; }
.tool.w { width: 43px; }
.tool svg { height: 24px; }
.tool.t-doc { width: 22px; padding-top: 14px; }
.tool.t-clip { width: 32px; margin-left: 10px; padding-top: 14px; }
.t-clip svg { margin-right: 8px; }
.off { color: #777; }
.caret { display: inline-block; margin-left: 2px; border: 3px solid transparent; border-top: 5px solid #444; border-bottom: 0; }
.stack { display: flex; flex-direction: column; gap: 5px; padding: 9px 0 0 2px; }
.t-doc + .stack { padding-left: 4px; }
.stack button { display: flex; align-items: center; gap: 4px; height: 12px; }
.stack.cut { margin-left: -8px; }
.stack.undo { padding-left: 16px; }
.modes { width: 64px; padding: 10px 6px 0 0; display: flex; flex-direction: column; align-items: center; gap: 1px; }
.pair { display: flex; gap: 5px; }
.pair button { width: 28px; height: 28px; display: grid; place-items: center; }
.pair svg { overflow: visible; }
.pair .on { background: #cacaca; }
.bracket { display: flex; align-items: center; gap: 10px; }
.bracket::before, .bracket::after { content: ""; width: 8px; height: 6px; border: 1px solid #666; border-width: 0 0 1px 1px; }
.bracket::after { border-width: 0 1px 1px 0; }
.zoom { display: flex; flex-direction: column; align-items: center; gap: 2px; padding-top: 16px; }
select {
  appearance: none; background-repeat: no-repeat;
  background-image: linear-gradient(to bottom left, var(--tip, #777) 50%, transparent 50%), linear-gradient(to bottom right, var(--tip, #777) 50%, transparent 50%);
  background-size: 4px 4px; background-position: right 7px center, right 3px center;
}
.zoom select { width: 57px; height: 21px; padding-left: 3px; border: 1px solid #999; background-color: #fff; font-size: 12px; }
.login { display: flex; align-items: center; gap: 6px; align-self: flex-start; margin: 16px 26px 0 17px; font-size: 15px; line-height: 24px; color: #555; }

/* format bar */
.formatbar { display: flex; align-items: center; gap: 8px; height: 31px; flex: none; padding-left: 8px; background: #d2d2d2; border-bottom: 1px solid var(--line); white-space: nowrap; }
.formatbar select { --tip: #999; height: 20px; border: 1px solid var(--line); padding-left: 2px; color: #888; }
.formatbar select.in { padding-left: 6px; }
.w100 { width: 100px; } .w90 { width: 90px; } .w35 { width: 35px; }
.plain { padding: 0 1px; }
.sep { width: 1px; height: 20px; margin: 0 1px; background: var(--line); }
.seg { display: flex; height: 20px; border: 1px solid var(--line); }
.seg button { width: 22px; display: grid; place-items: center; color: #aaa; font-size: 13px; border-left: 1px solid var(--line); }
.seg button:first-child { border-left: 0; width: 20px; }
.seg em { font-family: "Liberation Serif", serif; }
.seg .on { background: var(--sel); }
.seg .on path { stroke: #a4bac4; }
.drop { width: 37px; height: 20px; border: 1px solid var(--line); display: flex; align-items: center; justify-content: space-between; padding: 0 4px; }
.drop::after { content: ""; border: 4px solid transparent; border-top-color: #999; border-bottom: 0; }
.ink { width: 13px; line-height: 13px; color: #aaa; border-bottom: 2px solid #b5cbe4; }
.formatbar label { display: flex; align-items: center; gap: 4px; margin-right: -3px; font-size: 12px; }
.formatbar label.tight { margin-left: -4px; gap: 2px; }
.formatbar label input { width: 34px; height: 20px; border: 1px solid var(--line); }
.formatbar .hide { margin-left: 3px; gap: 5px; font-size: 11px; color: #666; }
.formatbar .hide input { appearance: none; width: 13px; height: 13px; background: #eee; border: 1px solid #ddd; }

/* columns */
main { flex: 1; display: flex; min-height: 0; }
.left { width: 328px; flex: none; display: flex; flex-direction: column; border-right: 2px solid var(--line); background: #fff; }
.phead { display: flex; align-items: center; height: 25px; flex: none; padding: 0 10px; background: var(--panel); position: relative; }
.phead h2 { flex: 1; text-align: center; padding-right: 10px; }
.acts { position: absolute; right: 8px; display: flex; align-items: center; gap: 10px; }
.acts.wide { gap: 13px; }
.pages { flex: 0 0 301px; border-bottom: 2px solid var(--line); }
.library { flex: 0 0 300px; min-height: 0; display: flex; flex-direction: column; border-bottom: 2px solid var(--line); }
.tree li, .list li { display: flex; align-items: center; height: 21px; }
.tree li { padding: 0 0 2px 6px; gap: 9px; }
.tree .sub { padding-left: 41px; }
.open { border: 4px solid transparent; border-right-color: #333; border-bottom-color: #333; }
.pick { padding: 0 5px 6px; background: var(--panel); }
.pick select { --tip: #000; width: 100%; height: 22px; border: 1px solid var(--line); padding-left: 4px; font-size: 12px; color: #000; }
.libbody { flex: 1; display: flex; min-height: 0; }
.widgets { flex: 1; display: grid; grid-template-columns: repeat(4, 1fr); grid-auto-rows: 74px; overflow: hidden; margin-left: -2px; padding-right: 2px; }
.widgets figure { padding-top: 6px; display: flex; flex-direction: column; align-items: center; }
.widgets figcaption { margin-top: 6px; white-space: nowrap; }
.mini { width: 28px; height: 15px; margin: 7px 0 8px; display: grid; place-items: center; border: 1px solid #888; border-radius: 2px; font-size: 6px; line-height: 12px; font-weight: bold; color: #444; }
.mini.primary { background: #199ad6; border-color: #199ad6; color: #fff; }
.mini.link { border-color: transparent; color: #2a72b8; }
.hx { font: bold 23px/30px "Liberation Sans", sans-serif; color: #606060; }
.ax { display: flex; gap: 3px; font: bold 22px/24px "Liberation Serif", serif; color: #0f9bd8; }
.ax.low { padding-top: 3px; margin-right: 10px; }
.master { display: flex; align-items: center; gap: 8px; height: 21px; padding-left: 22px; background: var(--sel); font-weight: bold; color: #222; }

/* scroll bars */
.vbar, .hbar { display: flex; align-items: center; background: #ebebeb; }
.vbar { flex-direction: column; width: 17px; padding: 6px 0; }
.hbar { height: 17px; padding: 0 6px; }
.up, .down, .lt, .rt { border: 3px solid transparent; }
.up { border-bottom: 4px solid #666; border-top: 0; } .down { border-top: 4px solid #666; border-bottom: 0; margin-top: auto; }
.lt { border-right: 4px solid #666; border-left: 0; } .rt { border-left: 4px solid #666; border-right: 0; margin-left: auto; }
.thumb { border: 1px solid #999; border-radius: 2px; display: grid; place-items: center; }
.vbar .thumb { width: 15px; background: linear-gradient(90deg, #f6f6f6, #ddd 50%, #c4c4c4); }
.hbar .thumb { height: 15px; background: linear-gradient(#f6f6f6, #ddd 50%, #c8c8c8); }
.lib .thumb { height: 7px; margin-top: 7px; }
.main.vbar .thumb { height: 51px; margin-top: 7px; }
.main.hbar .thumb { width: 155px; margin-left: 7px; }
.side .thumb { width: 39px; margin-left: 7px; }
.main.vbar .thumb::before { content: ""; width: 7px; height: 9px; background: repeating-linear-gradient(#666 0 2px, transparent 2px 4px); }
.hbar .thumb::before { content: ""; width: 10px; height: 7px; background: repeating-linear-gradient(90deg, #666 0 2px, transparent 2px 4px); }

/* work area */
.work { flex: 1; min-width: 0; display: flex; flex-direction: column; background: #fff; }
.tabs { display: flex; height: 25px; flex: none; padding-top: 1px; background: var(--line); }
.tabs a { display: flex; align-items: center; gap: 9px; padding: 0 8px; background: var(--panel); border-right: 1px solid var(--line); border-bottom: 1px solid var(--line); color: #666; white-space: nowrap; }
.tabs i { font: bold 12px/14px "Liberation Sans", sans-serif; color: #aaa; }
.tabs .cur { background: #fff; border-color: #fff; color: #111; font-weight: bold; }
.more { margin: auto 6px auto auto; border: 4px solid transparent; border-top: 5px solid #777; border-bottom: 0; }
.stage { flex: 1; min-height: 0; display: grid; grid-template: 15px 1fr 17px / 15px 1fr 17px; }
.rtop, .rleft { font-size: 9px; line-height: 10px; color: #222; overflow: hidden; display: flex; }
.rtop {
  grid-area: 1 / 2 / 2 / 4; border-bottom: 1px solid #aaa;
  background:
    repeating-linear-gradient(90deg, #aaa 0 1px, #0000 1px 100px),
    repeating-linear-gradient(90deg, #aaa 0 1px, #0000 1px 50px) 0 100% / 100% 8px no-repeat,
    repeating-linear-gradient(90deg, #aaa 0 1px, #0000 1px 10px) 0 100% / 100% 4px no-repeat;
}
.rtop span { width: 100px; padding: 1px 0 0 2px; flex: none; }
.rleft {
  grid-area: 2 / 1 / 4 / 2; flex-direction: column; border-right: 1px solid #aaa;
  background:
    repeating-linear-gradient(#aaa 0 1px, #0000 1px 100px),
    repeating-linear-gradient(#aaa 0 1px, #0000 1px 50px) 100% 0 / 8px 100% no-repeat,
    repeating-linear-gradient(#aaa 0 1px, #0000 1px 10px) 100% 0 / 4px 100% no-repeat;
}
.rleft span { height: 100px; flex: none; width: 11px; padding-bottom: 4px; writing-mode: vertical-rl; transform: rotate(180deg); text-align: end; }
.canvas { grid-area: 2 / 2; overflow: hidden; padding: 4px 0 0 34px; position: relative; }
.canvas::after { content: ""; position: absolute; left: 42px; bottom: 0; width: 1px; height: 8px; background: #ccc; }
.stage > .vbar { grid-area: 2 / 3; }
.stage > .hbar { grid-area: 3 / 2; }
.board { width: 833px; background: #f1f1f1; color: #d6d6d6; }
.board header { display: flex; gap: 15px; height: 62px; padding: 8px 9px 0; background: #656565; align-items: flex-start; }
.board header svg { margin-top: 7px; }
.board h2 { font: 24px/54px "Liberation Serif", var(--han), serif; }
.board h2 b { font-size: 21px; }
.board ul { width: 142px; background: #656565; font-size: 18px; font-weight: bold; }
.board li { height: 51px; padding: 3px 0 0 23px; border-top: 1px solid #787878; line-height: 47px; }
.board li.raised { line-height: 34px; }
.board li:last-child { height: 55px; position: relative; }
.board li:last-child::after { content: ""; position: absolute; left: 8px; bottom: 0; width: 1px; height: 6px; background: #ccc; }

/* inspector */
.right { width: 120px; flex: none; border-left: 2px solid var(--line); background: #f3f3f3; display: flex; flex-direction: column; overflow: hidden; white-space: nowrap; }
.insp { border-bottom: 1px solid var(--line); height: 26px; gap: 15px; }
.insp h2 { text-align: left; padding: 0; }
.ptabs { display: flex; height: 26px; flex: none; gap: 1px; line-height: 26px; text-align: center; }
.ptabs a { width: 82px; flex: none; background: var(--panel); }
.ptabs .cur { background: var(--blue); color: #fff; }
.events { padding: 11px 0 14px 10px; border-bottom: 1px solid #ccc; }
.events h3 { display: flex; align-items: center; gap: 6px; }
.events .add { display: flex; align-items: center; gap: 7px; padding: 11px 2px; font-size: 12px; line-height: 16px; }
.add a { color: #1486b8; text-decoration: underline; }
.events li { display: flex; align-items: center; gap: 7px; height: 21px; padding-left: 20px; }
.events button { display: block; width: 160px; height: 23px; margin-top: 15px; padding-left: 7px; border: 1px solid #aaa; text-align: left; font-size: 12px; }
.adapt { flex: 1; padding: 11px; }

/* floating bars */
.upload { position: fixed; top: 27px; right: 107px; width: 104px; height: 25px; display: flex; align-items: center; border: 1px solid #2a8fd0; border-radius: 3px; background: linear-gradient(#e4f4fd 50%, #a9dcf8 50%); box-shadow: 0 1px 2px #0006; font-size: 12px; color: #3a6c92; gap: 12px; white-space: nowrap; }
.upload span { width: 29px; height: 23px; display: grid; place-items: center; background: linear-gradient(#3ba9ee, #1488dc); }
.ime { position: fixed; right: 9px; bottom: 143px; width: 202px; height: 24px; display: flex; align-items: center; justify-content: space-between; padding-right: 3px; background: #fff; border: 1px solid #ccc; border-left: 0; color: #2a8ee0; font-size: 15px; }
.ime .badge { width: 23px; height: 24px; display: grid; place-items: center; background: #0f7bd4; }
.ime > svg { fill: none; stroke: #2a8ee0; stroke-width: 1.2px; }
.ime > .gray { stroke: #999; }

/* dialog */
.dialog { position: fixed; inset: 0 0 39px; margin: auto; width: 316px; height: fit-content; border: 1px solid #222; border-radius: 6px; padding: 0 6px 7px; background: linear-gradient(#d6e3f3 0, #e8f0f9 30%, #f0f6fc 29%, #b8d2ec 30%, #c6dcf2 100%); box-shadow: inset 0 0 0 1px #f4faff, 0 2px 12px 2px #000a; font-size: 12px; }
.dialog header { display: flex; align-items: center; gap: 5px; height: 29px; color: #000; }
.dialog header h2 { flex: 1; }
.x { align-self: flex-start; width: 47px; height: 19px; display: grid; place-items: center; border: 1px solid #5a1c1c; border-top: 0; border-radius: 0 0 4px 4px; background: linear-gradient(#e0a095 0, #d2806f 48%, #b9311c 52%, #d0583e 100%); }
.dbody { border: 1px solid #667; background: #f3f3f3; padding: 9px 10px 6px; }
.dbody p { line-height: 16px; }
.picker { display: flex; gap: 9px; margin-top: 4px; }
.list { width: 251px; height: 170px; background: #fff; border: 1px solid var(--line); font-size: 11px; }
.list li { padding-left: 5px; gap: 9px; }
.list label { display: flex; align-items: center; gap: 8px; }
.list .sub { padding-left: 40px; }
.list .sel { background: var(--sel); }
.side-acts { display: flex; flex-direction: column; gap: 8px; padding-top: 4px; }
.dialog input[type=checkbox], .dialog input[type=radio] { appearance: none; flex: none; width: 13px; height: 13px; border: 1px solid #8e8f8f; background: linear-gradient(135deg, #ccd2da, #fff); box-shadow: inset 0 0 0 1px #f4f4f4; display: grid; place-items: center; }
.dialog input[type=checkbox]:checked::before { content: ""; width: 9px; height: 9px; background: #33357a; clip-path: polygon(10% 45%, 40% 70%, 80% 0, 100% 10%, 50% 100%, 30% 100%, 5% 65%); }
.dialog input[type=radio] { border-radius: 50%; background: #f6f6f6; }
.dialog input[type=radio]:checked::before { content: ""; width: 9px; height: 9px; border-radius: 50%; background: radial-gradient(circle at 35% 35%, #8fe0f8, #1a86b4 50%, #0b3a58); }
fieldset { border: 1px solid var(--line); margin: 5px 3px 0 2px; padding: 0 10px; width: 276px; }
legend { padding: 0 4px; margin-left: -7px; line-height: 16px; }
fieldset > label { display: flex; align-items: center; gap: 7px; height: 21px; }
.place { padding: 4px 10px; }
.coords { display: flex; align-items: center; gap: 5px; height: 24px; padding-left: 20px; color: #777; }
.coords .top { margin-left: 6px; }
.coords input { width: 40px; height: 19px; border: 1px solid #ccc; padding-left: 3px; font-size: 11px; color: #888; }
.opts { margin-top: 7px; padding: 4px 10px; }
.opts + p { margin-top: 7px; }
.btns { display: flex; justify-content: flex-end; gap: 5px; margin-top: 14px; }
.btns button { width: 75px; height: 23px; border: 1px solid #707070; border-radius: 3px; background: linear-gradient(#f2f2f2 50%, #d8d8d8 50%, #cfcfcf); }
.btns .ok { border-color: #3c7f9c; box-shadow: inset 0 0 0 1px #35c8f4; background: linear-gradient(#eaf1f5 50%, #cfdde5 50%, #c5d5de); }

/* taskbar */
.taskbar { display: flex; align-items: center; height: 40px; flex: none; border-top: 1px solid #0d1b2e; padding-left: 8px; font: 12px/16px "Noto Sans", var(--han), sans-serif; color: #fff; background: linear-gradient(#ffffff30, #fff0 20%), linear-gradient(90deg, #173a66 0, #2a5878 14%, #1d4468 25%, #2b5672 40%, #214a6c 70%, #2d5573 80%, #1b3d66 90%, #16355c 100%); }
.orb { width: 38px; height: 38px; }
.icon { width: 58px; display: grid; place-items: center; }
.icon.last { width: 57px; }
.orb + .icon { width: 68px; margin-left: 7px; }
.app { width: 116px; height: 38px; display: flex; align-items: center; gap: 6px; padding: 0 8px; margin-right: 2px; border: 1px solid #a9bccf; border-radius: 3px; background: linear-gradient(160deg, #ffffff70, #ffffff18 50%, #ffffff08 51%); white-space: nowrap; overflow: hidden; }
.orb ~ .app.gap { margin-left: -3px; }
.stacked { display: flex; margin-right: 2px; }
.stacked .app { gap: 14px; margin-right: 0; }
.stacked .app + .app { border-left: 0; }
.app.active { background: linear-gradient(160deg, #e4eaf0cc, #ffffff70 50%, #ffffff58 51%); border-color: #e8eef4; }
.tray { flex: 1; display: flex; align-items: center; justify-content: space-between; padding: 0 0 0 12px; }
.tray .hi { margin-bottom: 6px; }
.lang { font-family: "Liberation Mono", monospace; margin-bottom: 6px; }
time { width: 82px; text-align: center; line-height: 18px; }
.desk { width: 14px; height: 38px; border: 1px solid #7d93aa; background: #ffffff20; }
```
